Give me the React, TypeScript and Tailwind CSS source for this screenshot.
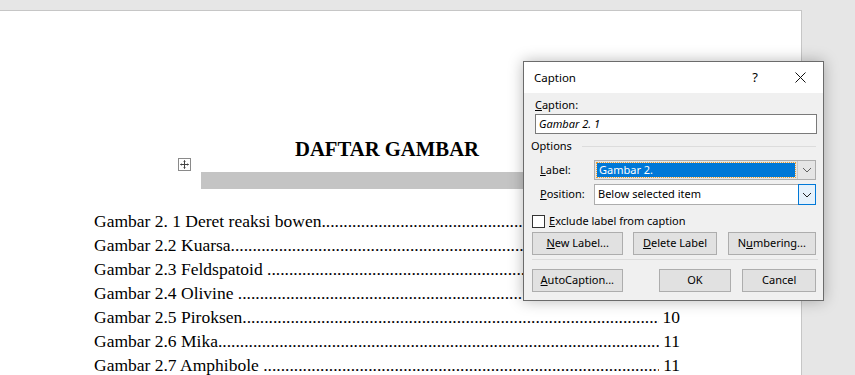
import React from "react";

const rows: [string, string][] = [
  ["Gambar 2. 1 Deret reaksi bowen", "7"],
  ["Gambar 2.2 Kuarsa", "8"],
  ["Gambar 2.3 Feldspatoid ", "8"],
  ["Gambar 2.4 Olivine ", "9"],
  ["Gambar 2.5 Piroksen", "10"],
  ["Gambar 2.6 Mika", "11"],
  ["Gambar 2.7 Amphibole ", "11"],
];

const DOTS = ".".repeat(110);

function Chevron({ color = "#444" }: { color?: string }) {
  return (
    <svg width="10" height="6" viewBox="0 0 10 6">
      <path d="M1 1 L5 5 L9 1" fill="none" stroke={color} strokeWidth="1" />
    </svg>
  );
}

function Btn({ children, w }: { children: React.ReactNode; w: string }) {
  return (
    <div
      className={`${w} h-[23px] border border-[#adadad] bg-[#e1e1e1] flex items-center justify-center text-[11px] text-black`}
    >
      {children}
    </div>
  );
}

export default function App() {
  return (
    <div className="w-[855px] h-[375px] bg-[#e6e6e6] overflow-hidden relative" style={{ fontFamily: "'Noto Sans', sans-serif" }}>
      {/* Page */}
      <div className="mt-[10px] w-[802px] h-[400px] bg-white border-t border-r border-[#c6c6c6]">
        <div
          className="pt-[125px] pl-[94px] w-[680px] text-black"
          style={{ fontFamily: "'Liberation Serif', 'Times New Roman', serif" }}
        >
          <div className="text-center font-bold text-[20.7px] leading-[26px]">DAFTAR GAMBAR</div>
          <div className="flex items-start mt-[-4px]">
            <div className="ml-[84px] mt-[0px] w-[13px] h-[13px] border border-[#8a8a8a] flex items-center justify-center">
              <svg width="9" height="9" viewBox="0 0 9 9">
                <path d="M4.5 0.5 V8.5 M0.5 4.5 H8.5" stroke="#444" strokeWidth="1" />
                <path d="M3.5 1.5 L4.5 0.5 L5.5 1.5 M3.5 7.5 L4.5 8.5 L5.5 7.5 M1.5 3.5 L0.5 4.5 L1.5 5.5 M7.5 3.5 L8.5 4.5 L7.5 5.5" fill="none" stroke="#444" strokeWidth="0.8" />
              </svg>
            </div>
            <div className="ml-[10px] mt-[14px] w-[420px] h-[17px] bg-[#c4c4c4]" />
          </div>
          <div className="mt-[20px] flex flex-col">
            {rows.map(([t, n], i) => (
              <div key={i} className="flex text-[17.5px] leading-[24px] whitespace-pre">
                <span>{t}</span>
                <span className="flex-1 min-w-0 overflow-hidden whitespace-nowrap">{DOTS}</span>
                <span className="pl-[4px]">{n}</span>
              </div>
            ))}
          </div>
        </div>
      </div>

      {/* Dialog */}
      <div
        className="absolute left-[523px] top-[61px] w-[301px] h-[240px] border border-[#6b6b6b] bg-[#f0f0f0] shadow-[0_0_14px_rgba(0,0,0,0.28)] text-[11px] text-black"
      >
        <div className="h-[31px] bg-white flex items-center pl-[10px] text-[11.5px]">
          <span className="flex-1">Caption</span>
          <span className="w-[20px] text-center mr-[30px] text-[13px]">?</span>
          <svg width="11" height="11" viewBox="0 0 11 11" className="mr-[17px]">
            <path d="M0.5 0.5 L10.5 10.5 M10.5 0.5 L0.5 10.5" stroke="#111" strokeWidth="1" />
          </svg>
        </div>
        <div className="px-[7px] pt-[3px]">
          <div className="pl-[4px] leading-[18px]"><u>C</u>aption:</div>
          <div className="ml-[4px] w-[282px] h-[20px] border border-[#7a7a7a] bg-white flex items-center pl-[3px] italic">
            Gambar 2. 1
          </div>
          <div className="flex items-center mt-[2px] leading-[20px]">
            <span>Options</span>
            <div className="flex-1 ml-[10px] h-px bg-[#dcdcdc]" />
          </div>
          <div className="flex items-center mt-[4px]">
            <span className="w-[63px] pl-[9px]"><u>L</u>abel:</span>
            <div className="flex-1 h-[20px] border border-[#adadad] bg-[#e5e5e5] flex">
              <div className="flex-1 m-[2px] bg-[#0078d7] text-white flex items-center pl-[2px] outline outline-1 outline-dotted outline-[#f0a030]">
                Gambar 2.
              </div>
              <div className="w-[18px] flex items-center justify-center border-l border-[#c8c8c8]">
                <Chevron color="#606060" />
              </div>
            </div>
          </div>
          <div className="flex items-center mt-[4px]">
            <span className="w-[63px] pl-[9px]"><u>P</u>osition:</span>
            <div className="flex-1 h-[21px] border border-[#adadad] bg-white flex">
              <div className="flex-1 flex items-center pl-[3px]">Below selected item</div>
              <div className="w-[18px] my-[-1px] mr-[-1px] flex items-center justify-center border border-[#0078d7] bg-[#e5f1fb]">
                <Chevron color="#222" />
              </div>
            </div>
          </div>
          <div className="flex items-center mt-[8px] pl-[1px]">
            <div className="w-[13px] h-[13px] border border-[#333] bg-white" />
            <span className="ml-[4px]"><u>E</u>xclude label from caption</span>
          </div>
          <div className="flex mt-[2px] pl-[1px] gap-[10px]">
            <Btn w="w-[92px]"><span><u>N</u>ew Label...</span></Btn>
            <Btn w="w-[84px]"><span><u>D</u>elete Label</span></Btn>
            <Btn w="w-[89px] ml-[1px]"><span>N<u>u</u>mbering...</span></Btn>
          </div>
          <div className="h-px bg-[#dcdcdc] mt-[4px] ml-[1px] w-[286px]" />
          <div className="flex mt-[9px] pl-[1px]">
            <Btn w="w-[91px]"><span><u>A</u>utoCaption...</span></Btn>
            <Btn w="w-[73px] ml-[36px]"><span>OK</span></Btn>
            <Btn w="w-[74px] ml-[11px]"><span>Cancel</span></Btn>
          </div>
        </div>
      </div>
    </div>
  );
}
